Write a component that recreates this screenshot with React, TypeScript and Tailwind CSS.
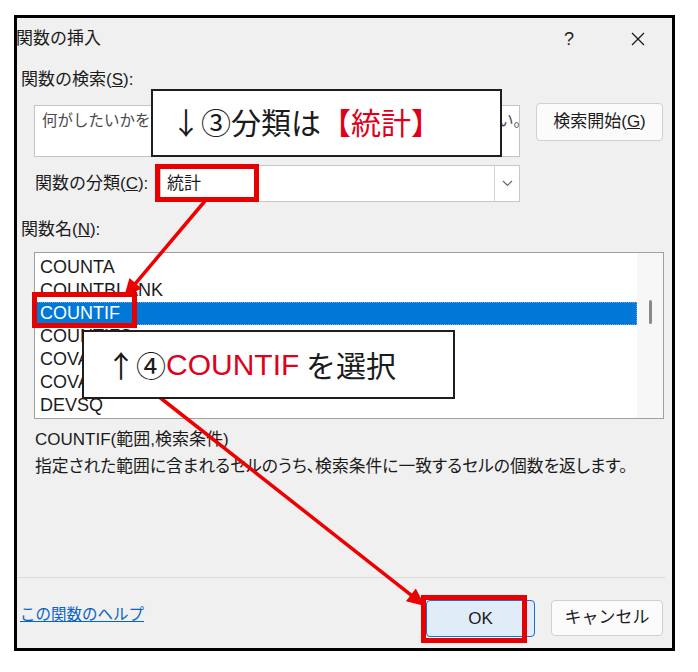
import React from 'react';

const FUNCS = ['COUNTA', 'COUNTBLANK', 'COUNTIF', 'COUNTIFS', 'COVARIANCE.P', 'COVARIANCE.S', 'DEVSQ'];

// red arrow with a filled head; tip sits at (x2, y2)
const Arrow: React.FC<{ x1: number; y1: number; x2: number; y2: number }> = ({ x1, y1, x2, y2 }) => {
  const dx = x2 - x1;
  const dy = y2 - y1;
  const len = Math.hypot(dx, dy);
  const ux = dx / len;
  const uy = dy / len;
  const L = 18;
  const W = 8;
  const bx = x2 - ux * L;
  const by = y2 - uy * L;
  const pts = `${x2},${y2} ${bx - uy * W},${by + ux * W} ${bx + uy * W},${by - ux * W}`;
  return (
    <g>
      <line x1={x1} y1={y1} x2={bx + ux * 2} y2={by + uy * 2} stroke="#ee0000" strokeWidth={3.5} />
      <polygon points={pts} fill="#ee0000" />
    </g>
  );
};

const App: React.FC = () => {
  return (
    <div className="relative w-[698px] h-[672px] bg-white overflow-hidden font-['Liberation_Sans','Noto_Sans_CJK_JP',sans-serif] text-[#1b1b1b]">
      {/* dialog */}
      <div className="ml-[14px] mt-[15px] w-[661px] h-[636px] border-[3px] border-black bg-[#f0f0f0] flex flex-col">
        {/* title bar */}
        <div className="h-[42px] flex items-center justify-between shrink-0">
          <span className="text-[17px] -ml-[1px]">関数の挿入</span>
          <div className="flex items-center pr-[27px]">
            <span className="w-[20px] text-center text-[18px]">?</span>
            <svg className="ml-[52px]" width="14" height="14" viewBox="0 0 14 14">
              <path d="M1 1 L13 13 M13 1 L1 13" stroke="#1b1b1b" strokeWidth="1.3" />
            </svg>
          </div>
        </div>

        <div className="mt-[8px] pl-[4px] h-[24px] leading-[24px] text-[17px]">
          関数の検索(<span className="underline">S</span>):
        </div>

        {/* search row */}
        <div className="mt-[11px] flex items-start">
          <div className="ml-[17px] mt-[2px] w-[486px] h-[52px] bg-white border border-[#c4c4c4] overflow-hidden pl-[7px] pt-[3px] text-[15.5px] leading-[24px] text-[#4a4a4a] whitespace-nowrap">
            何がしたいかを簡単に入力して、[検索開始]をクリックしてください。
          </div>
          <div className="ml-[16px] w-[127px] h-[38px] bg-[#fbfbfb] border border-[#d0d0d0] rounded-[4px] flex items-center justify-center text-[17px]">
            検索開始(<span className="underline">G</span>)
          </div>
        </div>

        {/* category row */}
        <div className="mt-[8px] flex items-center">
          <div className="pl-[18px] w-[143px] text-[17px]">
            関数の分類(<span className="underline">C</span>):
          </div>
          <div className="w-[360px] h-[37px] bg-white border border-[#c8c8c8] flex items-center">
            <span className="flex-1 pl-[6px] text-[17px]">統計</span>
            <div className="w-[25px] h-full border-l border-[#d4d4d4] flex items-center justify-center">
              <svg width="11" height="7" viewBox="0 0 11 7">
                <path d="M1 1 L5.5 5.5 L10 1" fill="none" stroke="#666" strokeWidth="1.2" />
              </svg>
            </div>
          </div>
        </div>

        <div className="mt-[16px] pl-[4px] h-[24px] leading-[24px] text-[17px]">
          関数名(<span className="underline">N</span>):
        </div>

        {/* function list */}
        <div className="mt-[10px] ml-[17px] w-[630px] h-[167px] bg-white border border-[#a0a0a0] flex">
          <div className="w-[602px] pt-[3px]">
            {FUNCS.map((f) => (
              <div
                key={f}
                className={
                  f === 'COUNTIF'
                    ? 'ml-[1px] h-[23px] leading-[23px] pl-[4px] text-[18px] bg-[#0078d7] text-white outline-1 outline-dotted outline-[#7aa7d6] -outline-offset-1'
                    : 'ml-[1px] h-[23px] leading-[23px] pl-[4px] text-[18px]'
                }
              >
                {f}
              </div>
            ))}
          </div>
          <div className="flex-1 bg-[#f7f7f7] flex justify-center pt-[47px]">
            <div className="w-[3px] h-[24px] rounded-full bg-[#8a8a8a]" />
          </div>
        </div>

        <div className="mt-[9px] pl-[18px] h-[24px] leading-[24px] text-[17px]">COUNTIF(範囲,検索条件)</div>
        <div className="mt-[3px] pl-[18px] h-[24px] leading-[24px] text-[16.8px] [font-feature-settings:'palt'] whitespace-nowrap">
          指定された範囲に含まれるセルのうち、検索条件に一致するセルの個数を返します。
        </div>

        {/* footer */}
        <div className="mt-auto mr-[7px] h-px bg-[#dadada]" />
        <div className="h-[70px] flex items-start pt-[22px] pr-[9px]">
          <span className="pl-[3px] mt-[3px] text-[15.5px] text-[#0b63c4] underline">この関数のヘルプ</span>
          <div className="ml-auto w-[109px] h-[37px] bg-[#e0ecf8] border border-[#1a6fc9] rounded-[4px] flex items-center justify-center text-[17px]">
            OK
          </div>
          <div className="ml-[16px] w-[112px] h-[36px] bg-[#fbfbfb] border border-[#d0d0d0] rounded-[4px] flex items-center justify-center text-[17px]">
            キャンセル
          </div>
        </div>
      </div>

      {/* annotations */}
      <svg className="absolute inset-0 pointer-events-none" width="698" height="672">
        <Arrow x1={205} y1={201} x2={124} y2={297} />
        <Arrow x1={158} y1={396} x2={425} y2={606} />
      </svg>

      <div className="absolute left-[155px] top-[164px] w-[104px] h-[38px] border-[5px] border-[#e60000]" />
      <div className="absolute left-[32px] top-[292px] w-[105px] h-[36px] border-[5px] border-[#e60000]" />
      <div className="absolute left-[421px] top-[595px] w-[106px] h-[48px] border-[5px] border-[#e60000]" />

      <div className="absolute left-[151px] top-[89px] w-[351px] h-[68px] bg-white border-2 border-[#1e1e1e] flex items-center pl-[18px] pb-[4px] text-[30px] whitespace-nowrap">
        <span className="font-['Noto_Sans_CJK_JP']">↓③分類は</span>
        <span className="font-['Noto_Sans_CJK_JP'] text-[#e0001b]">【統計】</span>
      </div>
      <div className="absolute left-[82px] top-[330px] w-[373px] h-[69px] bg-white border-2 border-[#1e1e1e] flex items-center pl-[22px] text-[30px] whitespace-nowrap">
        <span className="font-['Noto_Sans_CJK_JP']">↑④</span>
        <span className="text-[#e0001b]">COUNTIF</span>
        <span className="font-['Noto_Sans_CJK_JP']">&nbsp;を選択</span>
      </div>
    </div>
  );
};

export default App;
